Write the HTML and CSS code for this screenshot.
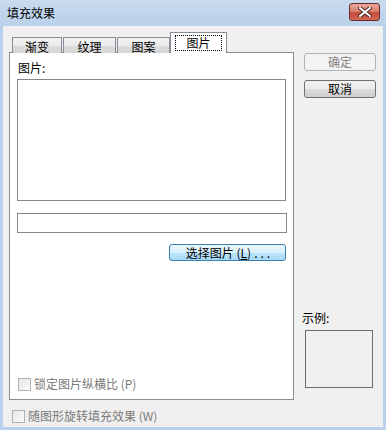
FILE: index.html
```html
<!DOCTYPE html>
<html lang="zh-CN">
<head>
    <meta charset="UTF-8">
    <title>填充效果</title>
    <link rel="stylesheet" href="styles.css">
</head>
<body>
    <div class="window">
        <div class="titlebar">
            <span class="title">填充效果</span>
            <button class="close-btn">
                <svg width="14" height="10" viewBox="0 0 14 10">
                    <path d="M2 1 L12 9 M12 1 L2 9" stroke="#4a2020" stroke-width="4" stroke-linecap="square"/>
                    <path d="M2 1 L12 9 M12 1 L2 9" stroke="#ffffff" stroke-width="2" stroke-linecap="square"/>
                </svg>
            </button>
        </div>

        <div class="client">
            <div class="left-col">
                <div class="tabs">
                    <div class="tab tab-1">渐变</div>
                    <div class="tab tab-2">纹理</div>
                    <div class="tab tab-3">图案</div>
                    <div class="tab tab-active"><span class="focus">图片</span></div>
                </div>

                <div class="panel">
                    <div class="label">图片:</div>
                    <div class="listbox"></div>
                    <div class="textfield"></div>
                    <div class="btn-row">
                        <button class="btn btn-blue">选择图片 (<u>L</u>)<span class="dots">...</span></button>
                    </div>
                    <label class="check check-inner">
                        <span class="box"></span>
                        <span class="check-text">锁定图片纵横比 (P)</span>
                    </label>
                </div>

                <label class="check check-outer">
                    <span class="box"></span>
                    <span class="check-text">随图形旋转填充效果 (W)</span>
                </label>
            </div>

            <div class="right-col">
                <button class="btn btn-side btn-disabled">确定</button>
                <button class="btn btn-side btn-normal">取消</button>
                <div class="sample-label">示例:</div>
                <div class="sample-box"></div>
            </div>
        </div>
    </div>
</body>
</html>
```

FILE: styles.css
```css
body {
    margin: 0;
    padding: 0;
    font-family: "Noto Sans CJK SC", "DejaVu Sans", sans-serif;
    font-size: 12px;
    color: #000;
}

.window {
    width: 386px;
    height: 430px;
    background-color: #b9d1ea;
    display: flex;
    flex-direction: column;
    overflow: hidden;
}

.titlebar {
    height: 26px;
    display: flex;
    align-items: center;
    justify-content: space-between;
    background: linear-gradient(#c9dbef, #b9d1ea);
    padding: 0 6px 0 7px;
}

.title {
    font-size: 12px;
    line-height: 14px;
    color: #000;
    margin-top: -1px;
}

.close-btn {
    width: 31px;
    height: 18px;
    margin-top: -3px;
    padding: 0;
    border: 1px solid #6b2a2a;
    border-radius: 3px;
    background: linear-gradient(#e9a99b 0%, #d88270 45%, #c74c3a 55%, #cf6a56 100%);
    display: flex;
    align-items: center;
    justify-content: center;
}

.client {
    flex: 1;
    margin: 0 3px 3px 3px;
    background-color: #f0f0f0;
    display: flex;
    padding-top: 7px;
}

.left-col {
    width: 285px;
    margin-left: 6px;
    display: flex;
    flex-direction: column;
}

.tabs {
    display: flex;
    align-items: flex-end;
    padding-left: 3px;
    height: 20px;
    position: relative;
    z-index: 1;
    margin-bottom: -1px;
}

.tab {
    height: 16px;
    box-sizing: border-box;
    border: 1px solid #898c95;
    border-bottom: none;
    background: linear-gradient(#f3f3f3 0%, #ebebeb 50%, #dddddd 51%, #d5d5d5 100%);
    display: flex;
    align-items: center;
    justify-content: center;
    line-height: 14px;
    padding-top: 2px;
    margin-right: 1px;
}

.tab-1 { width: 50px; }
.tab-2 { width: 53px; }
.tab-3 { width: 53px; margin-right: 0; }

.tab-active {
    width: 57px;
    height: 21px;
    background: #fff;
    padding-top: 0;
    margin-left: 0;
}

.focus {
    border: 1px dotted #000;
    padding: 0 10px;
    line-height: 14px;
}

.panel {
    height: 348px;
    box-sizing: border-box;
    border: 1px solid #898c95;
    background: #fff;
    padding: 8px 7px 8px 7px;
    display: flex;
    flex-direction: column;
}

.label {
    line-height: 14px;
    height: 14px;
    margin-left: 1px;
}

.listbox {
    margin-top: 4px;
    width: 269px;
    height: 122px;
    box-sizing: border-box;
    border: 1px solid #828790;
    background: #fff;
}

.textfield {
    margin-top: 12px;
    width: 270px;
    height: 20px;
    box-sizing: border-box;
    border: 1px solid #828790;
    background: #fff;
}

.btn-row {
    display: flex;
    justify-content: flex-end;
    margin-top: 11px;
}

.btn {
    font-family: "Noto Sans CJK SC", "DejaVu Sans", sans-serif;
    font-size: 12px;
    line-height: 14px;
    padding: 0;
    box-sizing: border-box;
    border-radius: 3px;
    color: #000;
}

.btn-blue {
    width: 117px;
    height: 17px;
    border: 1px solid #3c7fb1;
    background: linear-gradient(#eaf6fd 0%, #d9f0fc 50%, #bee6fd 51%, #a7d9f5 100%);
    padding-left: 4px;
}

.dots {
    letter-spacing: 3px;
    margin-left: 3px;
}

.check {
    display: flex;
    align-items: center;
    gap: 3px;
    color: #7a7a7a;
    line-height: 14px;
}

.check-inner {
    margin-top: auto;
    margin-left: 1px;
}

.check-outer {
    margin-top: 9px;
    margin-left: 3px;
}

.box {
    width: 13px;
    height: 13px;
    box-sizing: border-box;
    border: 1px solid #b1b1b1;
    background: linear-gradient(135deg, #e6e6e6, #fbfbfb);
}

.right-col {
    margin-left: 8px;
    display: flex;
    flex-direction: column;
    padding-top: 20px;
}

.btn-side {
    width: 72px;
    height: 18px;
    margin-left: 2px;
}

.btn-disabled {
    border: 1px solid #adb2b5;
    background: #f4f4f4;
    color: #838383;
}

.btn-normal {
    margin-top: 9px;
    border: 1px solid #707070;
    background: linear-gradient(#f2f2f2 0%, #ebebeb 50%, #dddddd 51%, #cfcfcf 100%);
}

.sample-label {
    margin-top: 213px;
    line-height: 14px;
}

.sample-box {
    margin-top: 5px;
    margin-left: 3px;
    width: 68px;
    height: 58px;
    box-sizing: border-box;
    border: 1px solid #6d6d6d;
    background: #f0f0f0;
}
```
